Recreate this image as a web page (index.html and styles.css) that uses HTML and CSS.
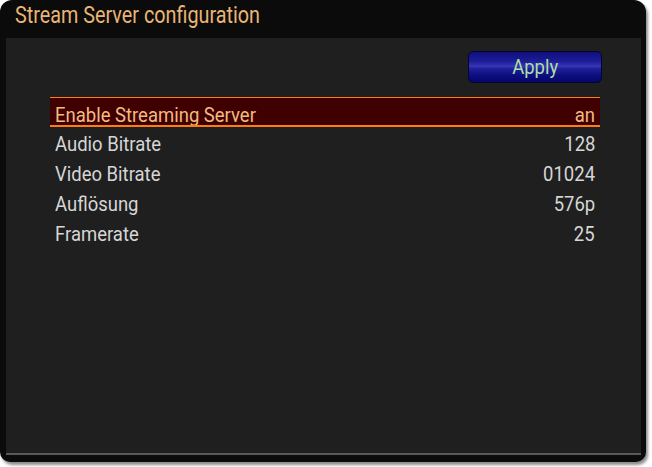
FILE: index.html
```html
<!DOCTYPE html>
<html lang="de">
	<head>
		<meta charset="UTF-8" />
		<meta name="viewport" content="width=device-width, initial-scale=1.0" />
		<title>Stream Server configuration</title>
		<link rel="stylesheet" href="styles.css">
	</head>
	<body>
		<div class="window">
			<div class="title"><span class="narrow">Stream Server configuration</span></div>
			<div class="panel">
				<div class="toolbar">
					<button class="apply"><span class="narrow">Apply</span></button>
				</div>
				<div class="list">
					<div class="row selected">
						<span class="narrow">Enable Streaming Server</span>
						<span class="narrow value">an</span>
					</div>
					<div class="row">
						<span class="narrow">Audio Bitrate</span>
						<span class="narrow value">128</span>
					</div>
					<div class="row">
						<span class="narrow">Video Bitrate</span>
						<span class="narrow value">01024</span>
					</div>
					<div class="row">
						<span class="narrow">Auflösung</span>
						<span class="narrow value">576p</span>
					</div>
					<div class="row">
						<span class="narrow">Framerate</span>
						<span class="narrow value">25</span>
					</div>
				</div>
			</div>
		</div>
	</body>
</html>
```

FILE: styles.css
```css
html,
body {
	width: 100%;
	height: 100%;
}

body {
	margin: 0;
	background: #ffffff;
	font-family: Roboto, 'Liberation Sans', sans-serif;
}

/* schmale Schrift nachbilden (Roboto Condensed fehlt) */
.narrow {
	display: inline-block;
	transform: scaleX(0.88);
	transform-origin: left center;
}

.narrow.value {
	transform-origin: right center;
}

.window {
	width: 646px;
	height: 462px;
	box-sizing: border-box;
	background: #0b0b0b;
	border-radius: 12px 12px 10px 10px;
	padding: 0 5px 7px 6px;
	display: flex;
	flex-direction: column;
	box-shadow: 2px 3px 3px rgba(0, 0, 0, 0.45);
}

.title {
	height: 38px;
	line-height: 31px;
	padding-left: 9px;
	color: #e9b574;
	font-size: 23px;
	white-space: nowrap;
}

.title .narrow {
	transform: scaleX(0.86);
}

.panel {
	flex: 1;
	background: #1f1f1f;
	border-bottom: 2px solid #585858;
	padding: 0 41px 0 44px;
}

.toolbar {
	display: flex;
	justify-content: flex-end;
	padding: 13px 0 14px 0;
}

.apply {
	width: 134px;
	height: 32px;
	margin-right: -2px;
	border: 1px solid #04042c;
	border-radius: 5px;
	background: linear-gradient(#10107e 0%, #1c1c96 30%, #3636b4 48%, #1e1e98 56%, #0c0c80 80%, #06066a 100%);
	color: #acdfa4;
	font-family: inherit;
	font-size: 21px;
	line-height: 30px;
	padding: 0;
}

.apply .narrow {
	transform-origin: center center;
}

.row {
	display: flex;
	justify-content: space-between;
	height: 30px;
	line-height: 35px;
	padding: 0 5px 0 5px;
	color: #d6d6d6;
	font-size: 21px;
	box-sizing: border-box;
	white-space: nowrap;
	overflow: hidden;
}

.row.selected {
	background: #400000;
	border-top: 1px solid #ff7d10;
	border-bottom: 2px solid #ff7d10;
	line-height: 34px;
	color: #f2bb82;
}
```
